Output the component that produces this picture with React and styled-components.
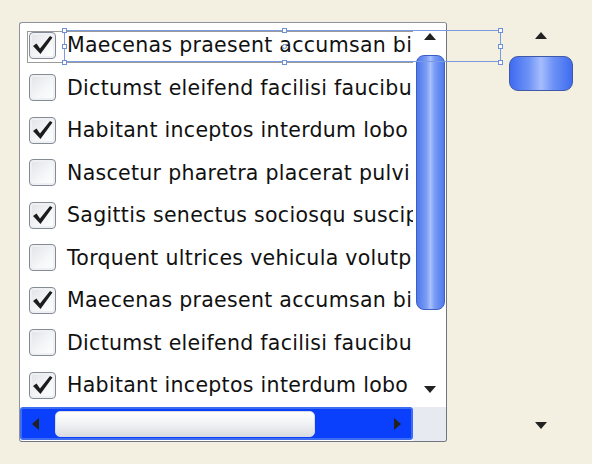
import React from 'react';
import styled, { createGlobalStyle } from 'styled-components';

const GlobalStyle = createGlobalStyle`
body {
  margin: 0;
  background: #f4f0e1;
  font-family: "DejaVu Sans", Verdana, sans-serif;
}
`;

const Page = styled.div`
position: relative;
width: 592px;
height: 464px;
box-sizing: border-box;
padding: 22px 0 0 19px;
display: flex;
align-items: flex-start;
`;

const Panel = styled.div`
box-sizing: border-box;
width: 428px;
height: 420px;
border: 1px solid #8d939c;
border-right-color: #6f7680;
border-bottom-color: #6f7680;
border-radius: 3px;
background: #fff;
display: grid;
grid-template-columns: 393px 1fr;
grid-template-rows: 384px 1fr;
overflow: hidden;
`;

const List = styled.div`
position: relative;
overflow: hidden;
padding-top: 1px;
`;

const Row = styled.div`
height: 42.5px;
display: flex;
align-items: center;
padding-left: 9px;
gap: 11px;
white-space: nowrap;
font-size: 20.5px;
letter-spacing: 0.3px;
color: #111;
`;

const Box = styled.div`
flex: none;
box-sizing: border-box;
width: 27px;
height: 27px;
border: 1px solid #858b95;
border-radius: 4px;
background: linear-gradient(135deg, #dfe2e7 0%, #f6f7f9 60%, #ffffff 100%);
box-shadow: inset 0 0 0 2px #eef0f3;
display: flex;
align-items: center;
justify-content: center;
`;

const FocusRect = styled.div`
position: absolute;
left: 7px;
top: 8px;
width: 400px;
height: 30px;
border: 1px solid #9a9a9a;
pointer-events: none;
`;

const VScroll = styled.div`
display: flex;
flex-direction: column;
align-items: center;
padding-top: 10px;
background: #fff;
`;

const Thumb = styled.div`
box-sizing: border-box;
width: 29px;
height: 255px;
margin: 15px 0 0 2px;
border: 1px solid #3d5fc4;
border-radius: 8px;
background: linear-gradient(90deg, #4f78ec 0%, #7b9df6 35%, #a9c0fd 50%, #7b9df6 65%, #4f78ec 100%);
`;

const Arrow = styled.div`
width: 0;
height: 0;
border-left: ${p => p.$size || 6}px solid transparent;
border-right: ${p => p.$size || 6}px solid transparent;
${p => p.$down
  ? `border-top: ${(p.$size || 6) + 1}px solid #222;`
  : `border-bottom: ${(p.$size || 6) + 1}px solid #222;`}
`;

const SideArrow = styled.div`
width: 0;
height: 0;
border-top: 6px solid transparent;
border-bottom: 6px solid transparent;
${p => p.$right
  ? 'border-left: 7px solid #222;'
  : 'border-right: 7px solid #222;'}
`;

const HScroll = styled.div`
box-sizing: border-box;
margin: 0 0 1px 0;
border: 2px solid #3d6cf0;
border-radius: 3px;
background: #0a3ffb;
display: flex;
align-items: center;
padding: 0 10px 0 10px;
`;

const HThumb = styled.div`
box-sizing: border-box;
width: 260px;
height: 26px;
margin-left: 16px;
border: 1px solid #d6dae0;
border-radius: 5px;
background: linear-gradient(180deg, #ffffff 0%, #f1f2f4 50%, #d9dce1 100%);
`;

const Spacer = styled.div`
flex: 1;
`;

const Corner = styled.div`
background: #e7ebf1;
`;

const Side = styled.div`
width: 64px;
height: 397px;
margin-left: 62px;
margin-top: 10px;
display: flex;
flex-direction: column;
align-items: center;
`;

const BlueButton = styled.div`
box-sizing: border-box;
width: 64px;
height: 35px;
margin-top: 17px;
border: 1px solid #3f58a8;
border-radius: 9px;
background: linear-gradient(90deg, #3f6cf0 0%, #6d92f6 30%, #a5bdfc 50%, #6d92f6 70%, #3f6cf0 100%);
`;

const Adorner = styled.div`
position: absolute;
left: 64px;
top: 30px;
width: 437px;
height: 32px;
box-sizing: border-box;
border: 1px solid #7b9be0;
pointer-events: none;
`;

const Handle = styled.div`
position: absolute;
width: 5px;
height: 5px;
box-sizing: border-box;
background: #fff;
border: 1px solid #6c90dd;
border-radius: ${p => (p.$round ? '50%' : '0')};
left: ${p => p.$x}px;
top: ${p => p.$y}px;
`;

const Check = () => (
  <svg width="21" height="20" viewBox="0 0 21 20">
    <path d="M1 11 L4.5 8.5 L8 13.5 L18 1 L20.5 2.5 L8.5 19 Z" fill="#1c1c1c" />
  </svg>
);

const items = [
  ['Maecenas praesent accumsan bi', true],
  ['Dictumst eleifend facilisi faucibu', false],
  ['Habitant inceptos interdum lobo', true],
  ['Nascetur pharetra placerat pulvi', false],
  ['Sagittis senectus sociosqu suscip', true],
  ['Torquent ultrices vehicula volutp', false],
  ['Maecenas praesent accumsan bi', true],
  ['Dictumst eleifend facilisi faucibu', false],
  ['Habitant inceptos interdum lobo', true],
];

const handles = [
  [-3, -3], [-3, 13], [-3, 29],
  [217, -3], [217, 13, true], [217, 29],
  [433, -3], [433, 13], [433, 29],
];

export default function App() {
  return (
    <>
      <GlobalStyle />
      <Page>
        <Panel>
          <List>
            {items.map(([label, checked], i) => (
              <Row key={i}>
                <Box>{checked && <Check />}</Box>
                {label}
              </Row>
            ))}
            <FocusRect />
          </List>
          <VScroll>
            <Arrow $size={6} />
            <Thumb />
            <Spacer />
            <Arrow $size={6} $down />
            <div style={{ height: 14 }} />
          </VScroll>
          <HScroll>
            <SideArrow />
            <HThumb />
            <Spacer />
            <SideArrow $right />
          </HScroll>
          <Corner />
        </Panel>
        <Side>
          <Arrow $size={6} />
          <BlueButton />
          <Spacer />
          <Arrow $size={6} $down />
        </Side>
        <Adorner>
          {handles.map(([x, y, r], i) => (
            <Handle key={i} $x={x} $y={y} $round={r} />
          ))}
        </Adorner>
      </Page>
    </>
  );
}
